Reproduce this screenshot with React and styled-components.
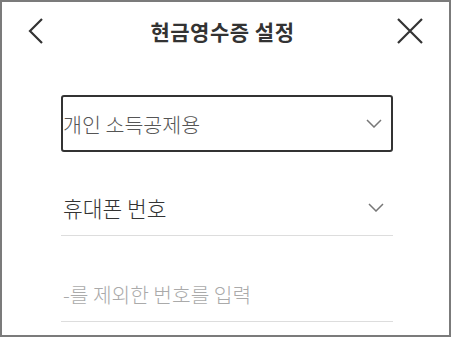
import React, { useState } from "react";
import styled, { createGlobalStyle } from "styled-components";

const GlobalStyle = createGlobalStyle`
  html, body {
    margin: 0;
    padding: 0;
    background: #ffffff;
  }
  body {
    font-family: "Noto Sans CJK KR", "Noto Sans", sans-serif;
  }
`;

const Modal = styled.div`
  box-sizing: border-box;
  width: 451px;
  height: 337px;
  border: 2px solid #7b7b7b;
  background: #ffffff;
  display: flex;
  flex-direction: column;
  overflow: hidden;
`;

const Header = styled.div`
  height: 58px;
  display: flex;
  align-items: center;
  justify-content: space-between;
  padding: 0 26px 0 20px;
`;

const IconButton = styled.button`
  border: none;
  background: none;
  padding: 0;
  width: 26px;
  height: 28px;
  display: flex;
  align-items: center;
  justify-content: center;
  cursor: pointer;
`;

const Title = styled.h1`
  margin: 0;
  font-size: 21px;
  font-weight: 700;
  color: #333333;
  letter-spacing: 0.5px;
`;

const Body = styled.div`
  padding: 35px 56px 0 59px;
  display: flex;
  flex-direction: column;
`;

const SelectBox = styled.div`
  height: 57px;
  box-sizing: border-box;
  border: 2px solid #333333;
  border-radius: 3px;
  display: flex;
  align-items: center;
  justify-content: space-between;
  padding: 0 9px 0 0;
  font-size: 20.6px;
  font-weight: 300;
  color: #555555;
`;

const Row = styled.div`
  margin-top: ${(p) => p.$gap}px;
  height: 56px;
  box-sizing: border-box;
  border-bottom: 1px solid #dddddd;
  display: flex;
  align-items: center;
  justify-content: space-between;
  padding: 0 9px 0 2px;
  font-size: ${(p) => p.$size}px;
  font-weight: 300;
  color: #333333;
`;

const Input = styled.input`
  border: none;
  outline: none;
  padding: 0;
  width: 100%;
  font-family: inherit;
  font-size: inherit;
  font-weight: inherit;
  color: #333333;
  background: transparent;

  &::placeholder {
    color: #aaaaaa;
  }
`;

const Chevron = () => (
  <svg width="16" height="9" viewBox="0 0 16 9">
    <path d="M1 1l7 7 7-7" fill="none" stroke="#777" strokeWidth="1.5" />
  </svg>
);

const App = () => {
  const [phone, setPhone] = useState("");
  return (
    <>
      <GlobalStyle />
      <Modal>
        <Header>
          <IconButton aria-label="back">
            <svg width="17" height="26" viewBox="0 0 17 26">
              <path d="M15 1L3 13l12 12" fill="none" stroke="#333" strokeWidth="2.2" />
            </svg>
          </IconButton>
          <Title>현금영수증 설정</Title>
          <IconButton aria-label="close">
            <svg width="26" height="26" viewBox="0 0 26 26">
              <path d="M1 1l24 24M25 1L1 25" fill="none" stroke="#333" strokeWidth="2.2" />
            </svg>
          </IconButton>
        </Header>
        <Body>
          <SelectBox>
            <span>개인 소득공제용</span>
            <Chevron />
          </SelectBox>
          <Row $gap={28} $size={21.5}>
            <span>휴대폰 번호</span>
            <Chevron />
          </Row>
          <Row $gap={30} $size={20.3}>
            <Input
              value={phone}
              onChange={(e) => setPhone(e.target.value)}
              placeholder="-를 제외한 번호를 입력"
            />
          </Row>
        </Body>
      </Modal>
    </>
  );
};

export default App;
